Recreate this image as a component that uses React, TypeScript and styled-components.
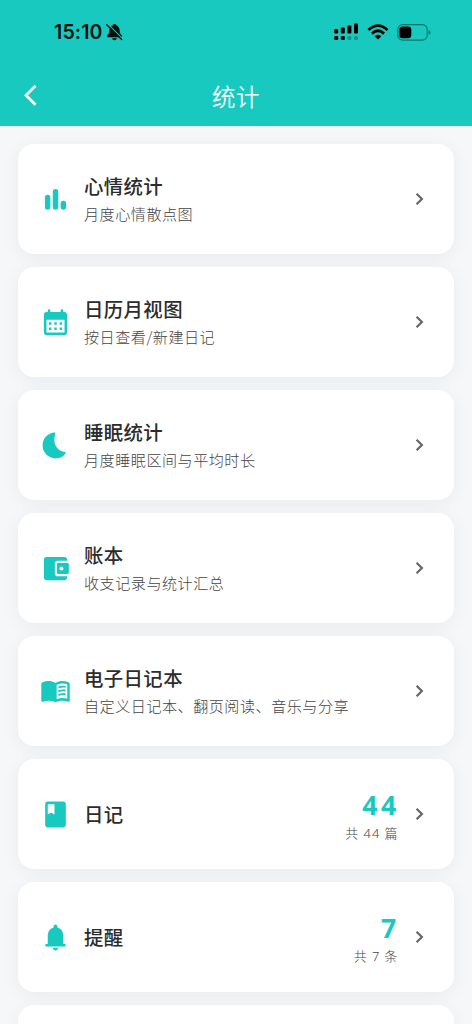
import React from "react";
import styled, { createGlobalStyle } from "styled-components";

const teal = "#17c9bf";

const GlobalStyle = createGlobalStyle`
  * { box-sizing: border-box; }
  body {
    margin: 0;
    background: #f6f7f9;
    font-family: "Noto Sans", "Noto Sans CJK SC", sans-serif;
    color: #333;
  }
`;

const Screen = styled.div`
  width: 472px;
  height: 1024px;
  overflow: hidden;
  display: flex;
  flex-direction: column;
`;

const Header = styled.header`
  flex: none;
  height: 126px;
  background: ${teal};
`;

const StatusBar = styled.div`
  height: 64px;
  padding: 0 40px 0 54px;
  display: flex;
  align-items: center;
  justify-content: space-between;
  color: #04110f;
`;

const StatusGroup = styled.div<{ $gap: number }>`
  display: flex;
  align-items: center;
  gap: ${(p) => p.$gap}px;
`;

const Clock = styled.span`
  font: 600 19.5px/24px Inter, sans-serif;
  letter-spacing: 0.15px;
`;

const NavBar = styled.div`
  height: 62px;
  padding: 2px 20px 0 20px;
  display: grid;
  grid-template-columns: 60px 1fr 60px;
  align-items: center;
`;

const Title = styled.h1`
  margin: 0;
  text-align: center;
  color: #fff;
  font: 350 23.5px/34px "Noto Sans CJK SC", sans-serif;
  letter-spacing: 0.4px;
`;

const List = styled.main`
  padding: 18px;
  display: flex;
  flex-direction: column;
  gap: 13px;
`;

const Card = styled.section`
  flex: none;
  height: 110px;
  padding: 0 24px 0 21.5px;
  display: flex;
  align-items: center;
  background: #fff;
  border-radius: 16px;
  box-shadow: 0 3px 18px rgba(0, 0, 0, 0.055);
`;

const CardIcon = styled.svg`
  flex: none;
  width: 31px;
  height: 31px;
  margin-right: 13.5px;
  fill: ${teal};
`;

const Labels = styled.div`
  flex: 1;
  display: flex;
  flex-direction: column;
`;

const Name = styled.h2`
  margin: 0;
  font: 500 19.4px/28px "Noto Sans CJK SC", sans-serif;
  letter-spacing: 0.4px;
  color: #2c2c2c;
`;

const Description = styled.p`
  margin: 0;
  padding-bottom: 1px;
  font: 300 15.1px/26px "Noto Sans CJK SC", sans-serif;
  letter-spacing: 0.5px;
  color: #444;
`;

const Tally = styled.div`
  display: flex;
  flex-direction: column;
  align-items: flex-end;
  padding-top: 6px;
  margin-right: 9.5px;
`;

const Total = styled.strong`
  font: 700 26.6px/32px "Noto Sans", sans-serif;
  letter-spacing: 3.4px;
  margin-right: -1px;
  color: ${teal};
`;

const Unit = styled.span`
  font: 300 12.9px/24px "Noto Sans", "Noto Sans CJK SC", sans-serif;
  letter-spacing: 1px;
  color: #444;
`;

const Chevron = () => (
  <svg width="22" height="24" viewBox="0 0 22 24" fill="none" stroke="#666" strokeWidth="2.2">
    <path d="M8.6 6.7 L13.9 12 L8.6 17.3" />
  </svg>
);

const icons = {
  chart: (
    <>
      <rect x="3.8" y="8.4" width="4.2" height="11.5" rx="2" />
      <rect x="9.9" y="3.8" width="4.2" height="16.1" rx="2" />
      <rect x="16" y="12.9" width="4.2" height="7" rx="2" />
    </>
  ),
  calendar: (
    <path
      fillRule="evenodd"
      d="M5 21.8c-1.1 0-2-.9-2-2v-14c0-1.1.9-2 2-2h1v-1a1 1 0 0 1 2 0v1h8v-1a1 1 0 0 1 2 0v1h1c1.1 0 2 .9 2 2v14c0 1.1-.9 2-2 2zM5 19.8h14v-10H5zM6.9 11.9h1.900v1.900H6.900zM11.050 11.900h1.900v1.900h-1.900zM15.200 11.900h1.900v1.900h-1.900zM6.900 15.900h1.900v1.900H6.900zM11.050 15.900h1.900v1.900h-1.900zM15.200 15.900h1.900v1.900h-1.900z"
    />
  ),
  moon: (
    <path d="M10.800 1.900C5.700 2.500 2 6.700 2 11.900 2 17.600 6.400 22 12 22c3.300 0 6-1.300 7.700-3.800.4-.6.2-1-.5-1.100-4.800-.6-8.100-4.600-8.100-9.300 0-1.600.3-3 .7-4.500.3-1-.1-1.500-1-1.400z" />
  ),
  wallet: (
    <path
      fillRule="evenodd"
      d="M21 18v1c0 1.100-.9 2-2 2H5c-1.100 0-2-.9-2-2V5c0-1.100.9-2 2-2h14c1.100 0 2 .9 2 2v1h-7.500c-1.100 0-2 .9-2 2v8c0 1.100.9 2 2 2zM14 16.200c-.5 0-.9-.4-.9-.9V8.700c0-.5.4-.9.9-.9h7.400c.5 0 .9.400.9.900v6.600c0 .5-.4.900-.9.900zM16.600 13.600a1.600 1.600 0 1 0 0-3.200 1.600 1.600 0 0 0 0 3.200z"
    />
  ),
  reader: (
    <path
      fillRule="evenodd"
      d="M12 5.400C10.300 4.400 8.400 3.900 6.500 3.900c-1.600 0-3.100.3-4.500.9-.6.3-1 .8-1 1.400v12.700c0 .8.7 1.300 1.400 1 1.300-.4 2.700-.7 4.100-.7 2 0 3.800.4 5.500 1.200 1.700-.8 3.500-1.200 5.500-1.200 1.400 0 2.800.3 4.100.7.700.3 1.400-.2 1.400-1V6.200c0-.6-.4-1.100-1-1.400-1.400-.6-2.900-.9-4.500-.9-1.900 0-3.800.5-5.500 1.500zM12.900 18V7c1.400-.8 3-1.200 4.600-1.200 1.300 0 2.500.2 3.600.6v11.200c-1.200-.3-2.400-.5-3.600-.5-1.600 0-3.200.3-4.600.9zM14.200 9.600V8.200c1.800-.7 3.700-.9 5.700-.5v1.400c-2-.4-3.900-.2-5.700.5zM14.200 12.500v-1.400c1.800-.7 3.700-.9 5.700-.5V12c-2-.4-3.900-.2-5.700.5zM14.200 15.400V14c1.800-.7 3.700-.9 5.700-.5v1.400c-2-.4-3.900-.2-5.700.5z"
    />
  ),
  diary: (
    <path
      fillRule="evenodd"
      d="M18 2H6c-1.100 0-2 .9-2 2v16c0 1.100.9 2 2 2h12c1.100 0 2-.9 2-2V4c0-1.100-.9-2-2-2zM6 4h5.200v8l-2.600-1.500L6 12z"
    />
  ),
  bell: (
    <path d="M5 19a1 1 0 0 1 0-2h1v-7q0-2.075 1.250-3.687T10.500 4.200v-.7q0-.625.438-1.062T12 2t1.063.438T13.500 3.500v.7q2 .5 3.250 2.113T18 10v7h1a1 1 0 0 1 0 2zM12 22q-.825 0-1.412-.587T10 20h4q0 .825-.587 1.413T12 22" />
  ),
};

interface Entry {
  icon: keyof typeof icons;
  name: string;
  description?: string;
  total?: number;
  unit?: string;
}

const entries: Entry[] = [
  { icon: "chart", name: "心情统计", description: "月度心情散点图" },
  { icon: "calendar", name: "日历月视图", description: "按日查看/新建日记" },
  { icon: "moon", name: "睡眠统计", description: "月度睡眠区间与平均时长" },
  { icon: "wallet", name: "账本", description: "收支记录与统计汇总" },
  { icon: "reader", name: "电子日记本", description: "自定义日记本、翻页阅读、音乐与分享" },
  { icon: "diary", name: "日记", total: 44, unit: "篇" },
  { icon: "bell", name: "提醒", total: 7, unit: "条" },
];

const MutedBell = () => (
  <svg width="17" height="18" viewBox="0 0 17 18">
    <path
      fill="currentColor"
      d="M8.500 1C7.500 1 7 1.600 6.800 2.200 4.300 3 3.500 5 3.400 7.300 3.300 10 2.700 10.800 1.300 12.300c-.8.9-.4 1.900.7 1.900h13c1.100 0 1.500-1 .7-1.900-1.400-1.500-2-2.300-2.100-5C13.500 5 12.700 3 10.200 2.200 10 1.600 9.500 1 8.500 1zM6 15.200h5c-.4 1.300-1.300 2-2.500 2s-2.100-.7-2.500-2z"
    />
    <path d="M1.900 1.200 L16.600 15.700" stroke={teal} strokeWidth="1.100" />
    <path d="M.7 1.700 L15.600 16.500" stroke="currentColor" strokeWidth="1.300" strokeLinecap="round" />
  </svg>
);

const Signal = () => (
  <svg width="25" height="18" viewBox="0 0 25 18" fill="#000">
    <rect x="0.200" y="6" width="4" height="4.500" rx="1" />
    <rect x="6.800" y="4.500" width="4" height="6" rx="1" />
    <rect x="13.400" y="2.500" width="4" height="8" rx="1" />
    <rect x="20" y="0.500" width="4" height="10" rx="1" />
    <rect x="0.200" y="13" width="4" height="4" rx="1" />
    <rect x="6.800" y="13" width="4" height="4" rx="1" />
    <rect x="13.400" y="13" width="4" height="4" rx="1.500" opacity=".25" />
    <rect x="20" y="13" width="4" height="4" rx="1.500" opacity=".25" />
  </svg>
);

const Wifi = () => (
  <svg width="22" height="16" viewBox="0 0 22 16" fill="none" stroke="#000" strokeWidth="2.800">
    <path d="M1.400 6 Q11 -2.800 20.600 6" />
    <path d="M4.900 9.600 Q11 4 17.100 9.600" />
    <path d="M11 15.600 L7.700 12.200 Q11 9.300 14.300 12.200Z" fill="#000" stroke="none" />
  </svg>
);

const Battery = () => (
  <svg width="35" height="17" viewBox="0 0 35 17">
    <rect x=".7" y=".7" width="29.600" height="15.400" rx="5" fill="none" stroke="#000" strokeOpacity=".42" strokeWidth="1.200" />
    <rect x="2.300" y="2.500" width="12" height="11.800" rx="3.300" fill="#000" />
    <path d="M31.700 5.900c2.300.8 2.300 4.200 0 5z" fill="#000" fillOpacity=".48" />
  </svg>
);

export default function App() {
  return (
    <Screen>
      <GlobalStyle />
      <Header>
        <StatusBar>
          <StatusGroup $gap={3}>
            <Clock>15:10</Clock>
            <MutedBell />
          </StatusGroup>
          <StatusGroup $gap={8}>
            <Signal />
            <Wifi />
            <Battery />
          </StatusGroup>
        </StatusBar>
        <NavBar>
          <svg width="22" height="26" viewBox="0 0 22 26" fill="none" stroke="#fff" strokeWidth="2.800">
            <path d="M15.500 2.800 L6 12.300 L15.500 21.800" />
          </svg>
          <Title>统计</Title>
        </NavBar>
      </Header>
      <List>
        {entries.map((e) => (
          <Card key={e.name}>
            <CardIcon viewBox="0 0 24 24">{icons[e.icon]}</CardIcon>
            <Labels>
              <Name>{e.name}</Name>
              {e.description && <Description>{e.description}</Description>}
            </Labels>
            {e.total !== undefined && (
              <Tally>
                <Total>{e.total}</Total>
                <Unit>共 {e.total} {e.unit}</Unit>
              </Tally>
            )}
            <Chevron />
          </Card>
        ))}
        <Card />
      </List>
    </Screen>
  );
}
